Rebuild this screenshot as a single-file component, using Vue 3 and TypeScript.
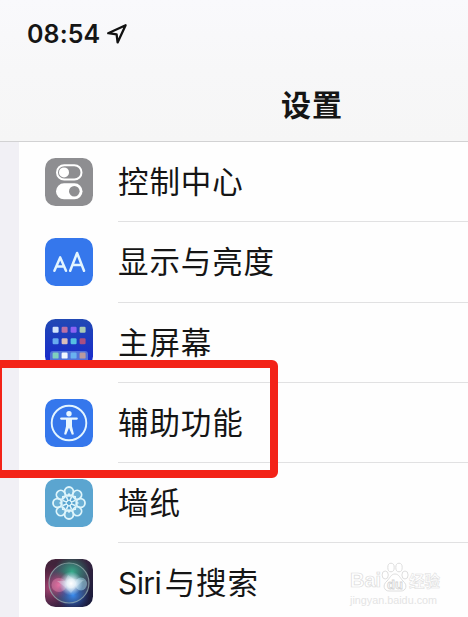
<script setup lang="ts">
interface Row {
  id: string
  latin?: string
  label: string
}

const rows: Row[] = [
  { id: 'control', label: '控制中心' },
  { id: 'display', label: '显示与亮度' },
  { id: 'home', label: '主屏幕' },
  { id: 'access', label: '辅助功能' },
  { id: 'wallpaper', label: '墙纸' },
  { id: 'siri', latin: 'Siri', label: '与搜索' },
]

const apps: string[][] = [
  ['#d3e4fa', '#bb70a4', '#8a62f2', '#a9cbb5'],
  ['#68abef', '#d8bdba', '#55bfe2', '#a84f82'],
  ['#7fd0bd', '#f3f8ff', '#69b1f0', '#b99a9e'],
]
const petals: number[] = [0, 45, 90, 135, 180, 225, 270, 315]
</script>

<template>
  <div class="screen">
    <header class="header">
      <div class="status">
        <span class="time">08:54</span>
        <svg class="arrow" width="22" height="22" viewBox="0 0 22 22">
          <path d="M19.6 2.2 2.2 10.2l8.4 1.2 1 8z" fill="none" stroke="#111" stroke-width="2.3" stroke-linejoin="round" />
        </svg>
      </div>
      <h1 class="title">设置</h1>
    </header>

    <main class="list">
      <div v-for="row in rows" :key="row.id" class="row">
        <svg class="icon" width="48" height="48" viewBox="0 0 48 48">
          <defs>
            <linearGradient id="homeBg" x1="0" y1="0" x2="0" y2="1">
              <stop offset="0" stop-color="#2149b4" />
              <stop offset="1" stop-color="#1726cf" />
            </linearGradient>
            <linearGradient id="siriBg" x1="0" y1="0" x2="1" y2="1">
              <stop offset="0" stop-color="#46243a" />
              <stop offset=".5" stop-color="#34243f" />
              <stop offset="1" stop-color="#161a3c" />
            </linearGradient>
            <radialGradient id="siriGreen"><stop offset="0" stop-color="#37ad8c" /><stop offset="1" stop-color="#277e68" stop-opacity="0" /></radialGradient>
            <radialGradient id="siriPink"><stop offset="0" stop-color="#e5619a" /><stop offset="1" stop-color="#a41e56" stop-opacity="0" /></radialGradient>
            <radialGradient id="siriBlue"><stop offset="0" stop-color="#3a8df0" /><stop offset="1" stop-color="#1d4cae" stop-opacity="0" /></radialGradient>
            <radialGradient id="siriGlow"><stop offset="0" stop-color="#fff" /><stop offset=".35" stop-color="#f2faff" stop-opacity=".9" /><stop offset="1" stop-color="#bfe4ff" stop-opacity="0" /></radialGradient>
            <clipPath id="tile"><rect width="48" height="48" rx="10.5" /></clipPath>
          </defs>

          <g v-if="row.id === 'control'">
            <rect width="48" height="48" rx="10.5" fill="#8e8e91" />
            <rect x="12" y="7.2" width="24.5" height="14.4" rx="7.2" fill="none" stroke="#fff" stroke-width="2" />
            <circle cx="19" cy="14.4" r="5" fill="#fff" />
            <rect x="11" y="25.3" width="26.5" height="16" rx="8" fill="#fff" />
            <circle cx="29.3" cy="33.3" r="5.3" fill="#8e8e91" />
          </g>

          <g v-else-if="row.id === 'display'">
            <rect width="48" height="48" rx="10.5" fill="#3577ec" />
            <g fill="none" stroke="#e3f5ff" stroke-width="2.5" stroke-linejoin="round" stroke-linecap="round">
              <path d="M9.4 32.8 15.2 19.4 21 32.8M11.4 28.4h7.6" />
              <path d="M25.2 32.8 32.1 15 39 32.8M27.5 27h9.2" />
            </g>
          </g>

          <g v-else-if="row.id === 'home'">
            <rect width="48" height="48" rx="10.5" fill="url(#homeBg)" />
            <rect x="5" y="32" width="38" height="11.5" rx="3" fill="#6688dd" opacity=".75" />
            <template v-for="(line, y) in apps" :key="y">
              <rect v-for="(c, x) in line" :key="x" :x="7.6 + x * 9" :y="[7.8, 19.2, 33.6][y]" width="6" height="6" rx="1.2" :fill="c" />
            </template>
          </g>

          <g v-else-if="row.id === 'access'">
            <rect width="48" height="48" rx="10.5" fill="#3577ec" />
            <circle cx="24" cy="24" r="17.3" fill="none" stroke="#e3f5ff" stroke-width="1.9" />
            <circle cx="24" cy="14.8" r="2.7" fill="#e9f7ff" />
            <path d="M16.2 19.6h15.6" fill="none" stroke="#e9f7ff" stroke-width="2.2" stroke-linecap="round" />
            <path d="M21 19h6v8.2l1.9 8-2 .6-2.9-7-2.9 7-2-.6 1.9-8z" fill="#e9f7ff" />
          </g>

          <g v-else-if="row.id === 'wallpaper'">
            <rect width="48" height="48" rx="10.5" fill="#5ba5d0" />
            <g v-for="a in petals" :key="a" :transform="`rotate(${a} 24 24)`">
              <circle cx="24" cy="12.4" r="4.4" fill="#91cae2" fill-opacity=".3" stroke="#dff5fb" stroke-width="1.8" />
              <path d="M24 21.8c-3-2-3.2-4.6 0-7 3.2 2.4 3 5 0 7z" fill="none" stroke="#dff5fb" stroke-width="1.1" />
            </g>
            <circle cx="24" cy="24" r="1.8" fill="#5ba5d0" />
          </g>

          <g v-else clip-path="url(#tile)">
            <rect width="48" height="48" fill="url(#siriBg)" />
            <circle cx="5" cy="29" r="24" fill="url(#siriPink)" opacity=".6" />
            <circle cx="24" cy="24" r="20" fill="#4b5970" opacity=".65" />
            <circle cx="27" cy="13" r="18" fill="url(#siriGreen)" />
            <circle cx="14" cy="26" r="14" fill="url(#siriPink)" />
            <circle cx="28" cy="36" r="17" fill="url(#siriBlue)" />
            <ellipse cx="14" cy="26" rx="7.5" ry="7" fill="#e287b0" opacity=".45" />
            <ellipse cx="36" cy="25" rx="6" ry="6.5" fill="#9fd3e6" opacity=".55" />
            <path d="M23 16 29 20 39 21 32 27 26 34 20 28 12 22 20 22z" fill="#e9f6ff" opacity=".3" />
            <circle cx="26" cy="24.5" r="12" fill="url(#siriGlow)" />
            <circle cx="24" cy="24" r="20" fill="none" stroke="#9db5b5" stroke-width="1.2" opacity=".7" />
          </g>
        </svg>
        <div class="label"><span v-if="row.latin" class="latin">{{ row.latin }}</span><span>{{ row.label }}</span></div>
      </div>
    </main>

    <div class="highlight"></div>

    <div class="watermark">
      <div class="brand">
        <span class="word">Bai</span>
        <svg class="paw" width="28" height="30" viewBox="0 0 28 30">
          <g fill="#fff" stroke="#dedede" stroke-width="1">
            <ellipse cx="4.2" cy="13" rx="3.1" ry="4" />
            <ellipse cx="10" cy="5.5" rx="3.2" ry="4.3" />
            <ellipse cx="18" cy="5.5" rx="3.2" ry="4.3" />
            <ellipse cx="24" cy="13" rx="3.1" ry="4" />
            <path d="M14 12c4 0 5 4 8 7 5 4 3 10-2 10H8c-5 0-7-6-2-10 3-3 4-7 8-7z" />
          </g>
          <text x="14" y="27" text-anchor="middle" class="du">du</text>
        </svg>
        <span class="cn">经验</span>
      </div>
      <div class="url">jingyan.baidu.com</div>
    </div>
  </div>
</template>

<style>
body {
  margin: 0;
  overflow: hidden;
}
</style>

<style scoped>
.screen {
  position: relative;
  width: 468px;
  height: 617px;
  overflow: hidden;
  background: #fefefe;
  font-family: "Noto Sans CJK SC", sans-serif;
  color: #151515;
}
.header {
  box-sizing: border-box;
  height: 142px;
  padding-top: 20px;
  border-bottom: 1px solid #d2d2d3;
  background: linear-gradient(#f9f9fc, #f7f7f8 50%, #f6f6f6);
}
.status {
  display: flex;
  align-items: center;
  height: 27px;
  padding-left: 27px;
}
.time {
  width: 79px;
  padding-top: 1px;
  font: 600 25px/27px Inter, sans-serif;
  letter-spacing: 0.1px;
}
.title {
  margin: 34px 0 0 281px;
  font-size: 30px;
  line-height: 44px;
  font-weight: 700;
  letter-spacing: 1px;
}
.list {
  box-sizing: border-box;
  height: 490px;
  border-left: 19px solid #f1f0f5;
}
.row {
  display: flex;
  height: 80.3px;
  padding-left: 26px;
}
.icon {
  flex: none;
  margin-top: 16px;
}
.label {
  flex: 1;
  box-sizing: border-box;
  margin-left: 25px;
  border-bottom: 1px solid #e1e1e2;
  font-size: 30.5px;
  line-height: 76px;
  letter-spacing: 0.9px;
  white-space: nowrap;
}
.latin {
  font-family: Inter, sans-serif;
  font-size: 30px;
  letter-spacing: -0.6px;
  margin-right: 3.5px;
}
.highlight {
  position: absolute;
  box-sizing: border-box;
  left: -6.5px;
  top: 360.4px;
  width: 284.5px;
  height: 118px;
  border: 8px solid #f32318;
  border-radius: 6px;
}
.watermark {
  position: absolute;
  left: 350px;
  top: 562px;
  width: 92px;
}
.brand {
  display: flex;
  align-items: flex-end;
  height: 30px;
  color: #fff;
  -webkit-text-stroke: 0.7px #dcdcdc;
}
.word {
  width: 31px;
  font: 700 20px/23px "Liberation Sans", sans-serif;
}
.paw {
  flex: none;
}
.du {
  font: 700 13px "Liberation Sans", sans-serif;
  fill: #fff;
  stroke: #d4d4d4;
  stroke-width: 0.8px;
}
.cn {
  font-size: 15.5px;
  font-weight: 700;
  line-height: 18px;
  margin-bottom: 3px;
  -webkit-text-stroke: 0.5px #dcdcdc;
}
.url {
  margin-top: 1px;
  font: 10.8px/14px "Liberation Sans", sans-serif;
  color: #e4e4e4;
}
</style>
